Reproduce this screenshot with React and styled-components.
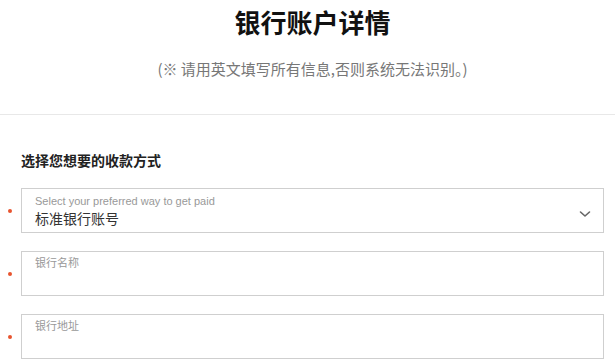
import React from 'react';
import styled, { createGlobalStyle } from 'styled-components';

const GlobalStyle = createGlobalStyle`
  html, body {
    margin: 0;
    padding: 0;
    background: #fff;
  }
  body {
    font-family: "Liberation Sans", "Noto Sans CJK SC", sans-serif;
    color: #333;
  }
`;

const cjk = `"Noto Sans CJK SC", "Liberation Sans", sans-serif`;

const Header = styled.header`
  display: flex;
  flex-direction: column;
  align-items: center;
  padding: 6px 0 35px 10px;
  border-bottom: 1px solid #e8e8e8;
`;

const Title = styled.h1`
  margin: 0;
  font-family: ${cjk};
  font-size: 26px;
  line-height: 32px;
  font-weight: 700;
  color: #111;
`;

const Note = styled.p`
  margin: 21px 0 0;
  font-family: ${cjk};
  font-size: 15px;
  line-height: 20px;
  color: #777;
`;

const Form = styled.section`
  display: flex;
  flex-direction: column;
  gap: 18px;
  padding: 35px 11px 0 8px;
`;

const SectionTitle = styled.h2`
  margin: 0 0 0 13px;
  font-family: ${cjk};
  font-size: 14px;
  line-height: 20px;
  font-weight: 700;
  color: #222;
`;

const Row = styled.div`
  display: flex;
  align-items: center;
  gap: 9px;
`;

const Dot = styled.span`
  flex: none;
  width: 4px;
  height: 4px;
  border-radius: 50%;
  background: #e8542f;
`;

const Box = styled.div`
  flex: 1;
  height: 45px;
  box-sizing: border-box;
  display: flex;
  align-items: flex-start;
  justify-content: space-between;
  border: 1px solid #cfcfcf;
  background: #fff;
  padding: ${p => (p.$select ? '6px 12px 0 13px' : '3px 12px 0 13px')};
`;

const Texts = styled.div`
  display: flex;
  flex-direction: column;
`;

const Hint = styled.span`
  font-family: ${p => (p.$latin ? '"Liberation Sans", sans-serif' : cjk)};
  font-size: 11px;
  line-height: ${p => (p.$latin ? '13px' : '14px')};
  color: #999;
`;

const Value = styled.span`
  margin-top: 1px;
  font-family: ${cjk};
  font-size: 14px;
  line-height: 18px;
  color: #333;
`;

const Chevron = styled.svg`
  flex: none;
  align-self: center;
  width: 12px;
  height: 8px;
  margin-right: 0;
`;

export default function App() {
  return (
    <>
      <GlobalStyle />
      <Header>
        <Title>银行账户详情</Title>
        <Note>(※ 请用英文填写所有信息,否则系统无法识别。)</Note>
      </Header>
      <Form>
        <SectionTitle>选择您想要的收款方式</SectionTitle>
        <Row>
          <Dot />
          <Box $select>
            <Texts>
              <Hint $latin>Select your preferred way to get paid</Hint>
              <Value>标准银行账号</Value>
            </Texts>
            <Chevron viewBox="0 0 12 8">
              <path d="M1.5 2 L6 6 L10.5 2" fill="none" stroke="#666" strokeWidth="1.6" strokeLinecap="round" strokeLinejoin="round" />
            </Chevron>
          </Box>
        </Row>
        <Row>
          <Dot />
          <Box>
            <Hint>银行名称</Hint>
          </Box>
        </Row>
        <Row>
          <Dot />
          <Box>
            <Hint>银行地址</Hint>
          </Box>
        </Row>
      </Form>
    </>
  );
}
